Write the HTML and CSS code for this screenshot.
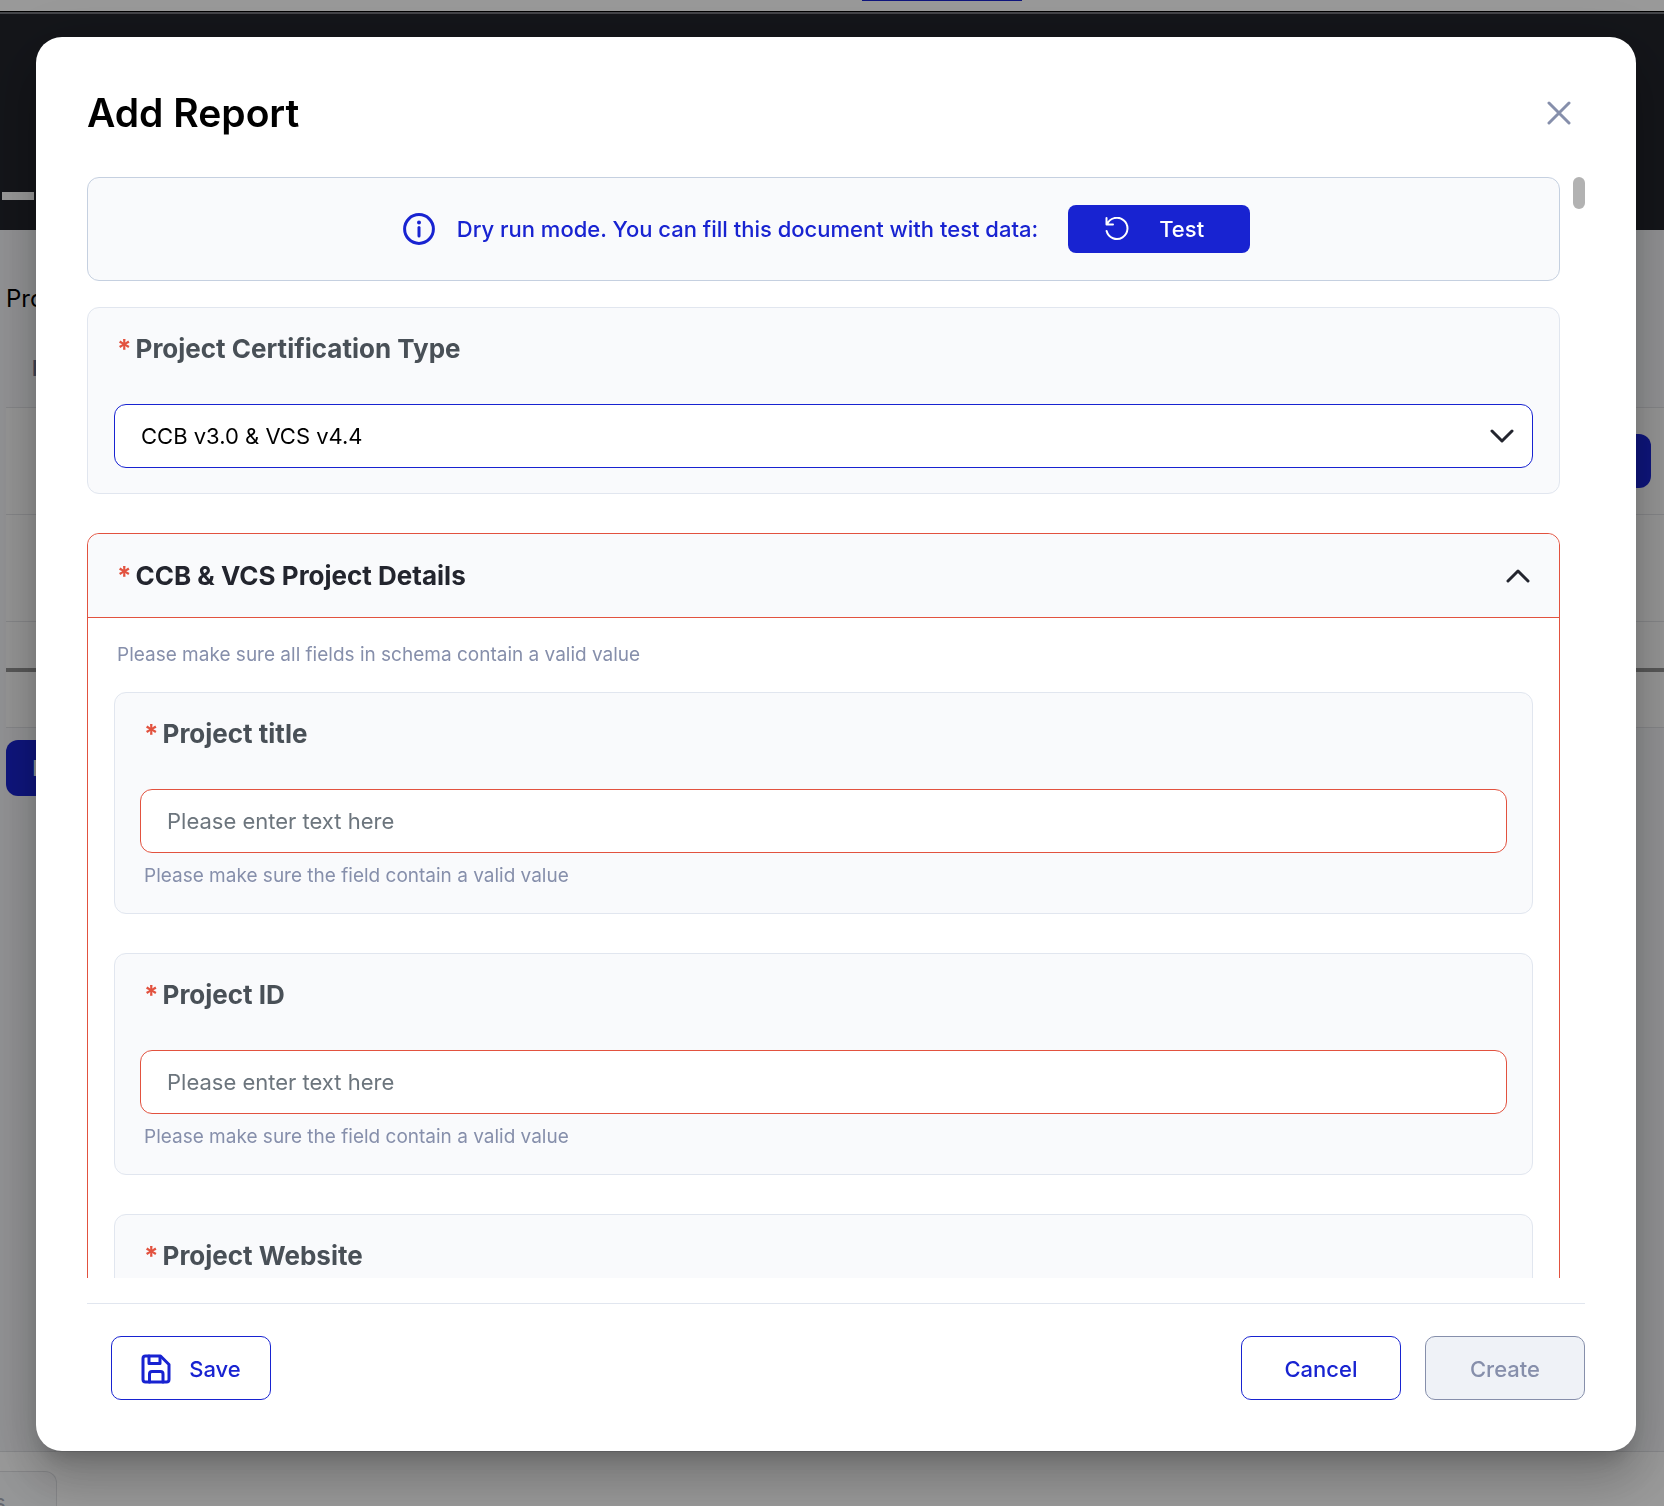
FILE: index.html
```html
<!DOCTYPE html>
<html lang="en">
<head>
<meta charset="utf-8">
<title>Add Report</title>
<link rel="stylesheet" href="styles.css">
</head>
<body>
<div class="page" aria-hidden="true">
  <div class="page-nav"><span class="page-tab"></span></div>
  <div class="page-hero"><span class="page-hero-mark"></span></div>
  <div class="page-main">
    <div class="page-title">Pro</div>
    <div class="grid">
      <div class="grid-head">I</div>
      <div class="grid-row"><span class="grid-action"></span></div>
      <div class="grid-row"></div>
      <div class="grid-row grid-row-scroll"><span class="grid-scroll"></span></div>
    </div>
    <div class="page-button">I</div>
  </div>
  <div class="page-footer"><span class="page-chip">s</span></div>
</div>

<div class="overlay">
  <div class="dialog" role="dialog" aria-modal="true" aria-labelledby="dialog-title">
    <header class="dialog-header">
      <h1 class="dialog-title" id="dialog-title">Add Report</h1>
      <button class="icon-button" type="button" aria-label="Close">
        <svg class="close-icon" viewBox="0 0 24 24"><path d="M2 2L22 22M22 2L2 22"/></svg>
      </button>
    </header>

    <div class="dialog-body">
      <div class="form">
        <div class="banner">
          <svg class="info-icon" viewBox="0 0 32 32"><circle cx="16" cy="16" r="14.4"/><path d="M16 14.5V23"/><circle class="dot" cx="16" cy="9.5" r="2"/></svg>
          <span class="banner-text">Dry run mode. You can fill this document with test data:</span>
          <button class="test-button" type="button">
            <svg class="reset-icon" viewBox="0 0 24 24"><path d="M1.5 1V7.5H8M2 7.5A10.6 10.6 0 1 1 1.6 14"/></svg>
            <span>Test</span>
          </button>
        </div>

        <section class="card card-outer">
          <label class="card-label" for="cert"><span class="star">*</span>Project Certification Type</label>
          <div class="select-wrap">
            <select class="control control-select" id="cert"><option>CCB v3.0 &amp; VCS v4.4</option></select>
            <svg class="chevron select-chevron" viewBox="0 0 24 14"><path d="M2 2L12 12L22 2"/></svg>
          </div>
        </section>

        <section class="group">
          <div class="group-header">
            <h2 class="group-title"><span class="star">*</span>CCB &amp; VCS Project Details</h2>
            <button class="icon-button" type="button" aria-label="Collapse section">
              <svg class="chevron" viewBox="0 0 24 14"><path d="M2 12L12 2L22 12"/></svg>
            </button>
          </div>
          <div class="group-body">
            <p class="hint group-hint">Please make sure all fields in schema contain a valid value</p>
            <div class="card">
              <label class="card-label" for="title"><span class="star">*</span>Project title</label>
              <input class="control control-invalid" id="title" type="text" placeholder="Please enter text here">
              <p class="hint field-hint">Please make sure the field contain a valid value</p>
            </div>
            <div class="card">
              <label class="card-label" for="pid"><span class="star">*</span>Project ID</label>
              <input class="control control-invalid" id="pid" type="text" placeholder="Please enter text here">
              <p class="hint field-hint">Please make sure the field contain a valid value</p>
            </div>
            <div class="card">
              <label class="card-label" for="site"><span class="star">*</span>Project Website</label>
              <input class="control control-invalid" id="site" type="text">
            </div>
          </div>
        </section>
      </div>
      <div class="scroll-thumb"></div>
    </div>

    <footer class="dialog-footer">
      <button class="button" type="button">
        <svg class="save-icon" viewBox="0 0 30 30"><path d="M4.5 2H19.5L28 10.5V25.5Q28 28 25.5 28H4.5Q2 28 2 25.5V4.5Q2 2 4.5 2Z"/><path d="M8 2V9.5H19V3M8.5 28V20Q8.5 17.5 11 17.5H19.5Q22 17.5 22 20V28"/></svg>
        <span>Save</span>
      </button>
      <div class="footer-actions">
        <button class="button" type="button">Cancel</button>
        <button class="button" type="button" disabled>Create</button>
      </div>
    </footer>
  </div>
</div>
</body>
</html>
```
FILE: styles.css
```css
* { box-sizing: border-box; }

:root {
  --blue: #1823d1;
  --red: #e2523f;
  --muted: #868fab;
  --surface: #f9fafc;
  --line: #e1e6ef;
}

body {
  margin: 0;
  height: 100vh;
  overflow: hidden;
  font-family: Inter, "Liberation Sans", sans-serif;
  font-size: 22px;
  color: #000;
}

button, input, select { font: inherit; }
h1, h2, p { margin: 0; }
svg { fill: none; stroke: currentColor; stroke-linecap: round; stroke-linejoin: round; }

/* Page behind the dialog */
.page {
  display: flex;
  flex-direction: column;
  height: 100vh;
  background: #f4f5f8;
}
.page-nav {
  height: 12px;
  flex: none;
  padding-left: 862px;
  background: #fff;
  border-bottom: 1px solid #000;
}
.page-tab { display: block; width: 160px; height: 1px; background: var(--blue); }
.page-hero {
  flex: none;
  height: 218px;
  padding: 178px 2px 0;
  border-top: 2px solid #72737a;
  background: #22242b;
}
.page-hero-mark { display: block; width: 32px; height: 8px; background: #fff; }
.page-main { flex: 1; padding: 52px 0 0 6px; }
.page-title { height: 34px; line-height: 34px; font-size: 24px; }
.grid { margin-top: 20px; }
.grid-head {
  height: 71px;
  padding-left: 26px;
  line-height: 64px;
  font-weight: 700;
  color: #6b7391;
}
.grid-row {
  display: flex;
  justify-content: flex-end;
  height: 107px;
  padding: 26px 13px;
  background: #fafafa;
  border-top: 1px solid #dfe0e4;
}
.grid-row-scroll { padding: 46px 0; border-bottom: 1px solid #dfe0e4; }
.grid-action { width: 160px; height: 54px; border-radius: 12px; background: var(--blue); }
.grid-scroll { flex: 1; height: 4px; background: #929292; }
.page-button {
  width: 160px;
  height: 56px;
  margin-top: 12px;
  padding-left: 26px;
  line-height: 56px;
  border-radius: 12px;
  background: var(--blue);
  color: #fff;
}
.page-footer {
  flex: none;
  height: 55px;
  padding-top: 19px;
  overflow: hidden;
  background: #fff;
  border-top: 1px solid #dfe0e4;
}
.page-chip {
  display: block;
  width: 57px;
  height: 60px;
  line-height: 60px;
  text-indent: -6px;
  border: 1px solid #dfe0e4;
  border-left: 0;
  border-radius: 0 12px 12px 0;
  background: #f9fafc;
  color: #a8acb8;
}

/* Dialog */
.overlay {
  position: fixed;
  inset: 0;
  display: flex;
  padding: 37px 28px 55px 36px;
  background: rgba(0, 0, 0, 0.4);
}
.dialog {
  flex: 1;
  min-width: 0;
  display: flex;
  flex-direction: column;
  padding: 51px;
  border-radius: 26px;
  background: #fff;
  box-shadow: 0 14px 20px -9px rgba(0, 0, 0, 0.2), 0 31px 48px 4px rgba(0, 0, 0, 0.14), 0 12px 58px 10px rgba(0, 0, 0, 0.12);
}
.dialog-header {
  display: flex;
  align-items: center;
  justify-content: space-between;
  height: 50px;
  padding-right: 14px;
}
.dialog-title { font-size: 39px; font-weight: 600; line-height: 50px; }
.icon-button {
  display: flex;
  padding: 0;
  border: 0;
  background: none;
  color: #23252e;
}
.close-icon { width: 24px; height: 24px; stroke-width: 3; color: var(--muted); }

.dialog-body {
  flex: 1;
  min-height: 0;
  display: flex;
  gap: 13px;
  margin-top: 39px;
}
.form { flex: 1; min-width: 0; overflow-y: auto; scrollbar-width: none; }
.scroll-thumb { width: 12px; height: 32px; border-radius: 6px; background: #b2b2b2; }

.banner {
  display: flex;
  align-items: center;
  justify-content: center;
  height: 104px;
  margin-bottom: 26px;
  padding-left: 6px;
  border: 1px solid #c5d0e0;
  border-radius: 12px;
  background: var(--surface);
  color: var(--blue);
  font-weight: 500;
}
.info-icon { width: 32px; height: 32px; stroke-width: 3; }
.info-icon .dot { fill: currentColor; stroke: none; }
.banner-text { margin: 0 30px 0 22px; }
.test-button {
  display: flex;
  align-items: center;
  gap: 30px;
  width: 182px;
  height: 48px;
  padding: 0 37px;
  border: 0;
  border-radius: 8px;
  background: var(--blue);
  color: #fff;
}
.reset-icon { width: 24px; height: 24px; stroke-width: 2; }

.card {
  padding: 25px;
  border: 1px solid var(--line);
  border-radius: 12px;
  background: var(--surface);
}
.card-outer { padding: 25px 26px; }
.card-label, .group-title {
  display: block;
  font-size: 26px;
  font-weight: 700;
  line-height: 32px;
}
.card-label { margin-bottom: 39px; padding-left: 4px; color: #495057; }
.card-outer .card-label { padding-left: 3px; }
.group-title { color: #23252e; }
.star { margin-right: 4px; color: var(--red); }

.control {
  display: block;
  width: 100%;
  height: 64px;
  padding: 0 26px;
  border: 1px solid var(--blue);
  border-radius: 12px;
  background: #fff;
  color: #000;
  outline: 0;
}
.control-select { appearance: none; }
.control-invalid { border-color: var(--red); }
.control::placeholder { color: #6c757d; opacity: 1; }
.select-wrap { display: grid; align-items: center; }
.select-wrap > * { grid-area: 1 / 1; }
.chevron { width: 24px; height: 14px; stroke-width: 3; color: #23252e; }
.select-chevron { justify-self: end; margin-right: 19px; pointer-events: none; }

.group {
  margin-top: 39px;
  border: 1px solid var(--red);
  border-radius: 12px;
}
.group-header {
  display: flex;
  align-items: center;
  justify-content: space-between;
  height: 84px;
  padding: 0 29px;
  border-bottom: 1px solid var(--red);
  border-radius: 12px 12px 0 0;
  background: var(--surface);
}
.group-body { display: flex; flex-direction: column; gap: 39px; padding: 25px 26px; }
.hint { font-size: 19px; line-height: 24px; color: var(--muted); }
.group-hint { padding-left: 3px; margin-bottom: -14px; }
.field-hint { padding-left: 4px; margin-top: 11px; }

.dialog-footer {
  display: flex;
  justify-content: space-between;
  margin-top: 25px;
  padding: 32px 0 0 24px;
  border-top: 1px solid var(--line);
}
.footer-actions { display: flex; gap: 24px; }
.button {
  display: flex;
  align-items: center;
  justify-content: center;
  gap: 18px;
  width: 160px;
  height: 64px;
  padding: 2px 0 0;
  border: 1px solid var(--blue);
  border-radius: 10px;
  background: #fff;
  color: var(--blue);
  font-weight: 500;
}
.button:disabled { border-color: var(--muted); background: #eff2f7; color: var(--muted); }
.save-icon { width: 30px; height: 30px; stroke-width: 3; }
```
